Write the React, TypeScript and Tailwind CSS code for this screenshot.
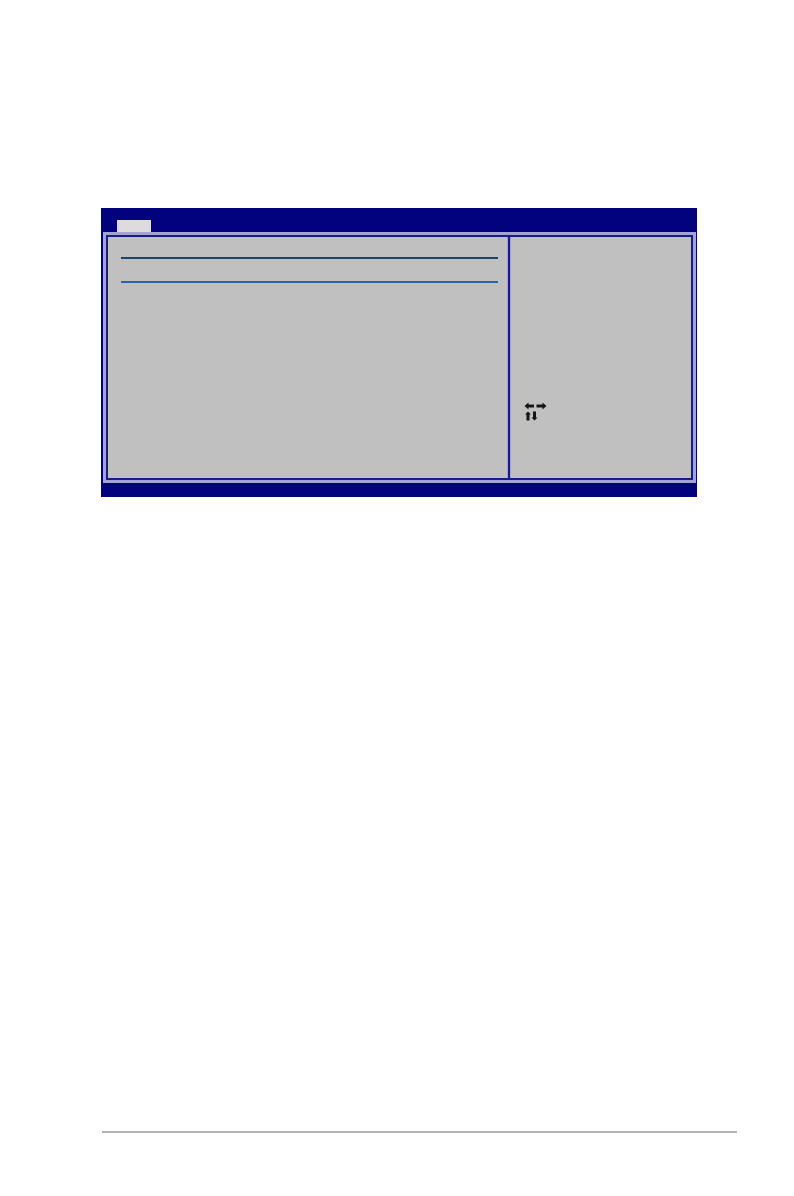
const ArrowKeys = () => (
  <svg width="24" height="20" viewBox="0 0 24 20" className="block">
    {/* left / right */}
    <path d="M0.5 4 L4.5 0.5 L4.5 2.5 L10 2.5 L10 5.5 L4.5 5.5 L4.5 7.5 Z" fill="#151515" />
    <path d="M22.5 4 L18.5 0.5 L18.5 2.5 L12.5 2.5 L12.5 5.5 L18.5 5.5 L18.5 7.5 Z" fill="#151515" />
    {/* up / down */}
    <path d="M4 9.5 L7 12.5 L5.5 12.5 L5.5 18.5 L2.5 18.5 L2.5 12.5 L1 12.5 Z" fill="#151515" />
    <path d="M10.5 18.5 L13.5 15.5 L12 15.5 L12 9.5 L9 9.5 L9 15.5 L7.5 15.5 Z" fill="#151515" />
  </svg>
);

export default function App() {
  return (
    <div className="min-h-[1196px] w-[794px] bg-white flex flex-col" style={{ fontFamily: '"Liberation Sans", Arial, sans-serif' }}>
      {/* BIOS screen */}
      <div className="ml-[101px] mt-[208px] w-[596px] h-[289px] bg-[#02027e] flex flex-col pl-[2px] pr-[1px] pb-[14px]">
        <div className="h-[24px] shrink-0 flex items-end pl-[14px]">
          <div className="w-[34px] h-[12px] bg-[#dcdcdc]" />
        </div>
        <div className="flex-1 border-[3px] border-[#a2a2d4] flex">
          <div className="flex-1 border-2 border-[#1a1a88] bg-[#c0c0c0] flex">
            {/* left panel */}
            <div className="w-[399px] shrink-0 flex flex-col pl-[13px] pr-[9px] pt-[20px]">
              <div className="h-[2px] bg-[#16466f]" />
              <div className="h-[22px]" />
              <div className="h-[2px] bg-[#2666a8]" />
            </div>
            {/* divider */}
            <div className="w-[1px] bg-[#a2a2d4]" />
            <div className="w-[2px] bg-[#1a1a88]" />
            <div className="w-[1px] bg-[#a2a2d4]" />
            {/* right panel */}
            <div className="flex-1 pt-[165px] pl-[13px]">
              <ArrowKeys />
            </div>
          </div>
        </div>
      </div>

      {/* footer rule */}
      <div className="ml-[102px] mt-[634px] w-[635px] h-[2px] bg-[#b2b2b2]" />
    </div>
  );
}
